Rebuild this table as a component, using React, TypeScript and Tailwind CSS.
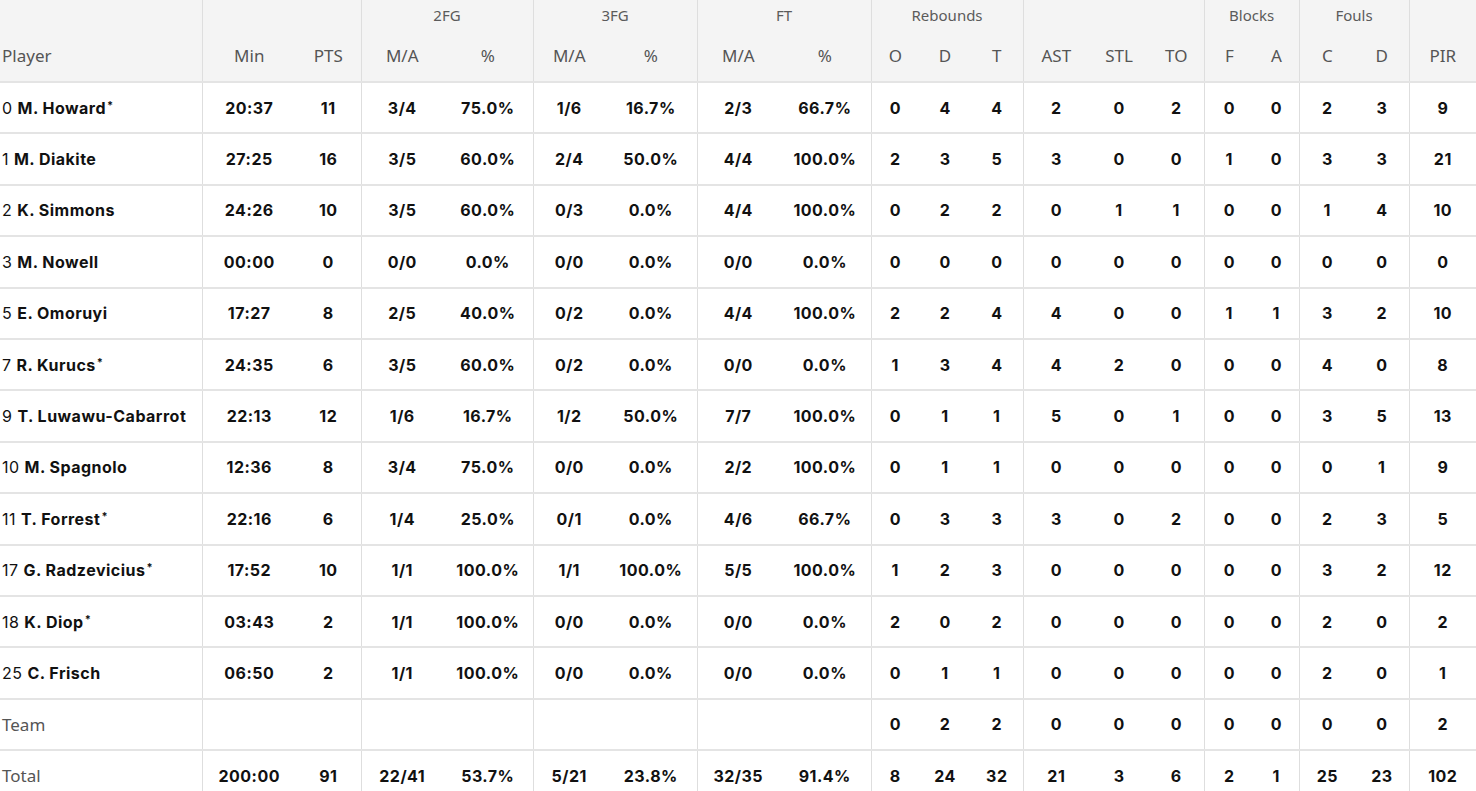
import React from "react";

type Row = {
  num?: string;
  name: string;
  star?: boolean;
  plain?: boolean;
  vals: string[];
};

const rows: Row[] = [
  { num: "0", name: "M. Howard", star: true, vals: ["20:37", "11", "3/4", "75.0%", "1/6", "16.7%", "2/3", "66.7%", "0", "4", "4", "2", "0", "2", "0", "0", "2", "3", "9"] },
  { num: "1", name: "M. Diakite", vals: ["27:25", "16", "3/5", "60.0%", "2/4", "50.0%", "4/4", "100.0%", "2", "3", "5", "3", "0", "0", "1", "0", "3", "3", "21"] },
  { num: "2", name: "K. Simmons", vals: ["24:26", "10", "3/5", "60.0%", "0/3", "0.0%", "4/4", "100.0%", "0", "2", "2", "0", "1", "1", "0", "0", "1", "4", "10"] },
  { num: "3", name: "M. Nowell", vals: ["00:00", "0", "0/0", "0.0%", "0/0", "0.0%", "0/0", "0.0%", "0", "0", "0", "0", "0", "0", "0", "0", "0", "0", "0"] },
  { num: "5", name: "E. Omoruyi", vals: ["17:27", "8", "2/5", "40.0%", "0/2", "0.0%", "4/4", "100.0%", "2", "2", "4", "4", "0", "0", "1", "1", "3", "2", "10"] },
  { num: "7", name: "R. Kurucs", star: true, vals: ["24:35", "6", "3/5", "60.0%", "0/2", "0.0%", "0/0", "0.0%", "1", "3", "4", "4", "2", "0", "0", "0", "4", "0", "8"] },
  { num: "9", name: "T. Luwawu-Cabarrot", vals: ["22:13", "12", "1/6", "16.7%", "1/2", "50.0%", "7/7", "100.0%", "0", "1", "1", "5", "0", "1", "0", "0", "3", "5", "13"] },
  { num: "10", name: "M. Spagnolo", vals: ["12:36", "8", "3/4", "75.0%", "0/0", "0.0%", "2/2", "100.0%", "0", "1", "1", "0", "0", "0", "0", "0", "0", "1", "9"] },
  { num: "11", name: "T. Forrest", star: true, vals: ["22:16", "6", "1/4", "25.0%", "0/1", "0.0%", "4/6", "66.7%", "0", "3", "3", "3", "0", "2", "0", "0", "2", "3", "5"] },
  { num: "17", name: "G. Radzevicius", star: true, vals: ["17:52", "10", "1/1", "100.0%", "1/1", "100.0%", "5/5", "100.0%", "1", "2", "3", "0", "0", "0", "0", "0", "3", "2", "12"] },
  { num: "18", name: "K. Diop", star: true, vals: ["03:43", "2", "1/1", "100.0%", "0/0", "0.0%", "0/0", "0.0%", "2", "0", "2", "0", "0", "0", "0", "0", "2", "0", "2"] },
  { num: "25", name: "C. Frisch", vals: ["06:50", "2", "1/1", "100.0%", "0/0", "0.0%", "0/0", "0.0%", "0", "1", "1", "0", "0", "0", "0", "0", "2", "0", "1"] },
  { name: "Team", plain: true, vals: ["", "", "", "", "", "", "", "", "0", "2", "2", "0", "0", "0", "0", "0", "0", "0", "2"] },
  { name: "Total", plain: true, vals: ["200:00", "91", "22/41", "53.7%", "5/21", "23.8%", "32/35", "91.4%", "8", "24", "32", "21", "3", "6", "2", "1", "25", "23", "102"] },
];

const widths = [202, 94, 65, 82, 90, 72, 92, 82, 92, 48, 52, 52, 66, 60, 55, 50, 45, 56, 54, 67];
// indexes (in full column list) that start a group → left border
const groupStart = new Set([1, 3, 5, 7, 9, 12, 15, 17, 19]);

const subLabels = ["Player", "Min", "PTS", "M/A", "%", "M/A", "%", "M/A", "%", "O", "D", "T", "AST", "STL", "TO", "F", "A", "C", "D", "PIR"];

const groups: { label: string; span: number }[] = [
  { label: "", span: 1 },
  { label: "", span: 2 },
  { label: "2FG", span: 2 },
  { label: "3FG", span: 2 },
  { label: "FT", span: 2 },
  { label: "Rebounds", span: 3 },
  { label: "", span: 3 },
  { label: "Blocks", span: 2 },
  { label: "Fouls", span: 2 },
  { label: "", span: 1 },
];

const headFont = { fontFamily: '"Noto Sans", "Open Sans", sans-serif' };
const bodyFont = { fontFamily: 'Inter, "Noto Sans", sans-serif' };

export default function App() {
  return (
    <div className="w-[1476px] h-[791px] overflow-hidden bg-white">
      <table className="border-collapse table-fixed w-[1476px]">
        <colgroup>
          {widths.map((w, i) => (
            <col key={i} style={{ width: w }} />
          ))}
        </colgroup>
        <thead>
          <tr className="bg-[#f4f4f4]">
            {groups.map((g, i) => (
              <th
                key={i}
                colSpan={g.span}
                className={`h-[30px] p-0 text-center align-middle text-[15px] font-normal text-[#5b5b5b] ${i > 0 ? "border-l border-[#dedede]" : ""}`}
                style={headFont}
              >
                {g.label}
              </th>
            ))}
          </tr>
          <tr className="bg-[#f4f4f4] border-b-2 border-[#e4e4e4]">
            {subLabels.map((s, i) => (
              <th
                key={i}
                className={`h-[52px] p-0 align-middle text-[17px] font-normal text-[#555555] ${i === 0 ? "text-left pl-[2px]" : "text-center"} ${groupStart.has(i) ? "border-l border-[#dedede]" : ""}`}
                style={headFont}
              >
                {s}
              </th>
            ))}
          </tr>
        </thead>
        <tbody>
          {rows.map((r, ri) => (
            <tr key={ri} className="border-b-2 border-[#e4e4e4]">
              <td className="h-[51.4px] p-0 pl-[2px] text-left align-middle whitespace-nowrap">
                {r.plain ? (
                  <span className="text-[17px] text-[#555555]" style={headFont}>
                    {r.name}
                  </span>
                ) : (
                  <span className="text-[16px] text-[#111111] tracking-[0.03em]" style={bodyFont}>
                    <span className="font-normal">{r.num} </span>
                    <span className="font-bold">{r.name}</span>
                    {r.star && <span className="font-bold text-[11px] relative -top-[5px] ml-[1px]">*</span>}
                  </span>
                )}
              </td>
              {r.vals.map((v, vi) => (
                <td
                  key={vi}
                  className={`h-[51.4px] p-0 text-center align-middle text-[16px] font-bold text-[#111111] tracking-[0.03em] ${groupStart.has(vi + 1) ? "border-l border-[#dedede]" : ""}`}
                  style={bodyFont}
                >
                  {v}
                </td>
              ))}
            </tr>
          ))}
        </tbody>
      </table>
    </div>
  );
}
